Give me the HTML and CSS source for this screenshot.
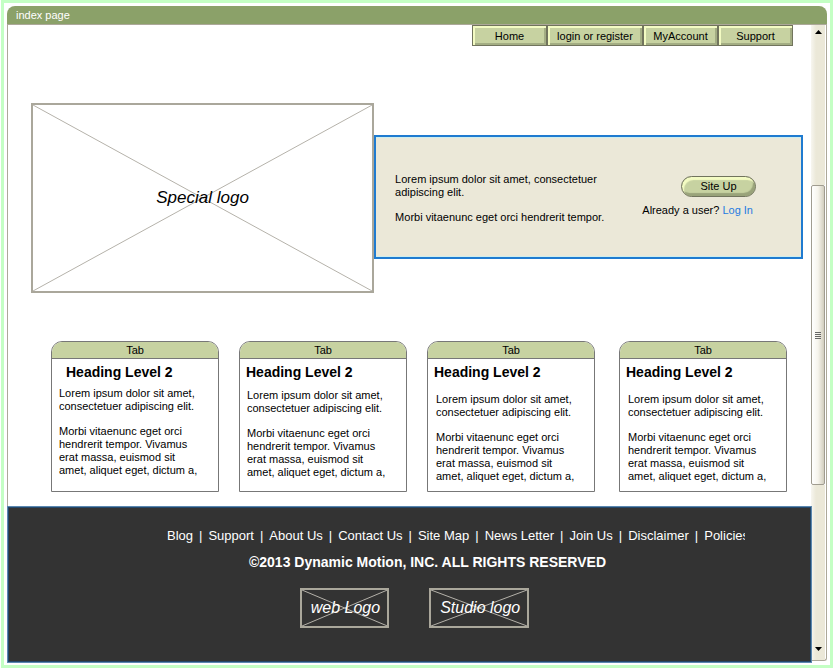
FILE: index.html
```html
<!DOCTYPE html>
<html lang="en">
<head>
<meta charset="utf-8">
<meta name="viewport" content="width=device-width, initial-scale=1">
<title>index page</title>
<link rel="stylesheet" href="styles.css">
</head>
<body>
<div class="frame">
  <div class="window">
    <header class="title-bar">index page</header>
    <div class="window-body">
      <div class="page">
        <nav class="top-nav">
          <button type="button" class="nav-button">Home</button>
          <button type="button" class="nav-button nav-button-wide">login or register</button>
          <button type="button" class="nav-button">MyAccount</button>
          <button type="button" class="nav-button">Support</button>
        </nav>

        <main>
          <section class="hero">
            <div class="placeholder placeholder-large">
              <svg class="cross" viewBox="0 0 100 100" preserveAspectRatio="none" aria-hidden="true"><path d="M0 0L100 100M100 0L0 100"/></svg>
              <span class="placeholder-label">Special logo</span>
            </div>
            <div class="signup">
              <div class="copy signup-copy">
                <p>Lorem ipsum dolor sit amet, consectetuer adipiscing elit.</p>
                <p>Morbi vitaenunc eget orci hendrerit tempor.</p>
              </div>
              <div class="signup-actions">
                <button type="button" class="pill">Site Up</button>
                <p class="login">Already a user? <a href="#login">Log In</a></p>
              </div>
            </div>
          </section>

          <section class="cards">
            <article class="card card-indented">
              <div class="card-tab">Tab</div>
              <h2>Heading Level 2</h2>
              <div class="copy">
                <p>Lorem ipsum dolor sit amet, consectetuer adipiscing elit.</p>
                <p>Morbi vitaenunc eget orci hendrerit tempor. Vivamus erat massa, euismod sit amet, aliquet eget, dictum a,</p>
              </div>
            </article>
            <article class="card">
              <div class="card-tab">Tab</div>
              <h2>Heading Level 2</h2>
              <div class="copy">
                <p>Lorem ipsum dolor sit amet, consectetuer adipiscing elit.</p>
                <p>Morbi vitaenunc eget orci hendrerit tempor. Vivamus erat massa, euismod sit amet, aliquet eget, dictum a,</p>
              </div>
            </article>
            <article class="card card-loose">
              <div class="card-tab">Tab</div>
              <h2>Heading Level 2</h2>
              <div class="copy">
                <p>Lorem ipsum dolor sit amet, consectetuer adipiscing elit.</p>
                <p>Morbi vitaenunc eget orci hendrerit tempor. Vivamus erat massa, euismod sit amet, aliquet eget, dictum a,</p>
              </div>
            </article>
            <article class="card card-loose">
              <div class="card-tab">Tab</div>
              <h2>Heading Level 2</h2>
              <div class="copy">
                <p>Lorem ipsum dolor sit amet, consectetuer adipiscing elit.</p>
                <p>Morbi vitaenunc eget orci hendrerit tempor. Vivamus erat massa, euismod sit amet, aliquet eget, dictum a,</p>
              </div>
            </article>
          </section>
        </main>

        <footer class="footer">
          <nav class="footer-links">
            <a href="#blog">Blog</a><span>|</span>
            <a href="#support">Support</a><span>|</span>
            <a href="#about">About Us</a><span>|</span>
            <a href="#contact">Contact Us</a><span>|</span>
            <a href="#sitemap">Site Map</a><span>|</span>
            <a href="#news">News Letter</a><span>|</span>
            <a href="#join">Join Us</a><span>|</span>
            <a href="#disclaimer">Disclaimer</a><span>|</span>
            <a href="#policies">Policies</a>
          </nav>
          <p class="copyright">©2013 Dynamic Motion, INC. ALL RIGHTS RESERVED</p>
          <div class="footer-logos">
            <div class="placeholder placeholder-small">
              <svg class="cross" viewBox="0 0 100 100" preserveAspectRatio="none" aria-hidden="true"><path d="M0 0L100 100M100 0L0 100"/></svg>
              <span class="placeholder-label">web Logo</span>
            </div>
            <div class="placeholder placeholder-small">
              <svg class="cross" viewBox="0 0 100 100" preserveAspectRatio="none" aria-hidden="true"><path d="M0 0L100 100M100 0L0 100"/></svg>
              <span class="placeholder-label">Studio logo</span>
            </div>
          </div>
        </footer>
      </div>

      <div class="scrollbar" aria-hidden="true">
        <div class="track track-before"><svg width="7" height="4" viewBox="0 0 7 4"><path d="M0 4L3.5 0L7 4Z"/></svg></div>
        <div class="thumb"><i></i><i></i><i></i><i></i></div>
        <div class="track track-after"><svg width="7" height="4" viewBox="0 0 7 4"><path d="M0 0H7L3.5 4Z"/></svg></div>
      </div>
    </div>
  </div>
</div>
</body>
</html>
```
FILE: styles.css
```css
* {
  box-sizing: border-box;
}

body {
  margin: 0;
  padding: 0 0 2px 1px;
  background: #fff;
  color: #000;
  font: 11px/13px "Liberation Sans", Arial, sans-serif;
}

p,
h2 {
  margin: 0;
}

a {
  color: inherit;
  text-decoration: none;
}

button {
  margin: 0;
  padding: 1px 0 0;
  background: #c7d2a1;
  color: #000;
  font: inherit;
}

.frame {
  padding: 3px 3px 4px;
  border: 3px solid #c4ffc4;
}

.title-bar {
  padding: 3px 9px 2px;
  border-bottom: 1px solid #aca899;
  border-radius: 8px 8px 0 0;
  background: #8ba169;
  color: #fff;
}

.window-body {
  display: flex;
  border: 1px solid #aca899;
  border-top: 0;
  border-radius: 0 0 3px 3px;
}

.page {
  flex: 1;
  min-width: 0;
}

.top-nav {
  display: flex;
  justify-content: flex-end;
  padding-right: 18px;
}

.nav-button {
  width: 75px;
  height: 21px;
  border: 1px solid #71745d;
  box-shadow: inset 2px 2px #f3fbc3, inset -2px -2px #a3ad83;
}

.nav-button-wide {
  width: 96px;
}

.hero {
  display: grid;
  grid-template-columns: 4fr 5fr;
  align-items: center;
  padding: 57px 8px 0 23px;
}

.placeholder {
  position: relative;
  display: flex;
  align-items: center;
  justify-content: center;
  border: 2px solid #aaa79b;
  font-size: 17px;
  line-height: 20px;
  font-style: italic;
}

.placeholder-large {
  height: 190px;
}

.placeholder-small {
  height: 40px;
  padding: 0 7px 0 9px;
  font-size: 16px;
}

.placeholder-label {
  position: relative;
}

.cross {
  position: absolute;
  inset: 0;
  width: 100%;
  height: 100%;
  fill: none;
  stroke: #b5b2aa;
}

.cross path {
  vector-effect: non-scaling-stroke;
}

.signup {
  display: flex;
  align-items: center;
  justify-content: space-between;
  height: 124px;
  margin-bottom: 2px;
  padding: 2px 45px 0 19px;
  border: 2px solid #1f7bd0;
  background: #ebe8d8;
  box-shadow: inset 0 1px #cdeeee, inset 0 -1px #cdeeee;
}

.copy p + p {
  margin-top: 12px;
}

.signup-copy {
  width: 220px;
}

.signup-actions {
  display: flex;
  flex-direction: column;
  align-items: flex-end;
  gap: 7px;
  margin-bottom: 4px;
}

.pill {
  width: 75px;
  height: 21px;
  border: 1px solid #71745d;
  border-radius: 11px;
  box-shadow: inset 2px 3px 1px #f3fbc3, inset -2px -3px 1px #99a37a;
}

.login {
  padding-right: 3px;
  white-space: nowrap;
}

.login a {
  color: #1f7be0;
}

.cards {
  display: flex;
  gap: 20px;
  padding: 48px 24px 14px 43px;
}

.card {
  flex: 0 1 168px;
  height: 151px;
  border: 1px solid #777;
  border-radius: 11px 11px 0 0;
}

.card:last-child {
  margin-left: auto;
}

.card-tab {
  height: 17px;
  padding-top: 2px;
  border-bottom: 1px solid #777;
  border-radius: 10px 10px 0 0;
  background: #c7d2a1;
  text-align: center;
}

.card h2 {
  padding: 4px 6px 8px;
  font-size: 14px;
  line-height: 18px;
}

.card .copy {
  padding: 0 16px 0 7px;
}

.card-indented h2 {
  padding: 4px 14px 6px;
}

.card-loose h2 {
  padding-bottom: 12px;
}

.card-loose .copy {
  padding-left: 8px;
}

.footer {
  position: relative;
  margin: 0 -1px -3px;
  padding: 20px 0 33px;
  border: 2px solid #24486a;
  outline: 1px solid #5c88b0;
  outline-offset: -1px;
  background: #333;
  color: #fff;
  font-size: 13px;
  line-height: 16px;
}

.footer-links {
  display: flex;
  gap: 6px;
  max-width: 578px;
  margin: 0 65px 0 auto;
  overflow: hidden;
  white-space: nowrap;
}

.copyright {
  margin: 10px 0 18px;
  padding-left: 36px;
  font-size: 14px;
  font-weight: bold;
  text-align: center;
}

.footer-logos {
  display: flex;
  justify-content: center;
  gap: 40px;
  padding-left: 10px;
}

.scrollbar {
  display: grid;
  grid-template-rows: 160fr 300fr 175fr;
  width: 15px;
  padding-right: 1px;
}

.track {
  display: flex;
  justify-content: center;
  background: linear-gradient(to right, #f7f6f0, #ebe8d8 5px);
}

.track-before {
  padding-top: 5px;
}

.track-after {
  align-items: flex-end;
  padding-bottom: 9px;
}

.thumb {
  display: flex;
  flex-direction: column;
  align-items: center;
  justify-content: center;
  gap: 1px;
  border: 1px solid #a09c90;
  border-radius: 2px;
  background: linear-gradient(to right, #fff, #f6f4ec 50%, #d2cebe);
}

.thumb i {
  width: 6px;
  height: 1px;
  background: #666;
}
```
